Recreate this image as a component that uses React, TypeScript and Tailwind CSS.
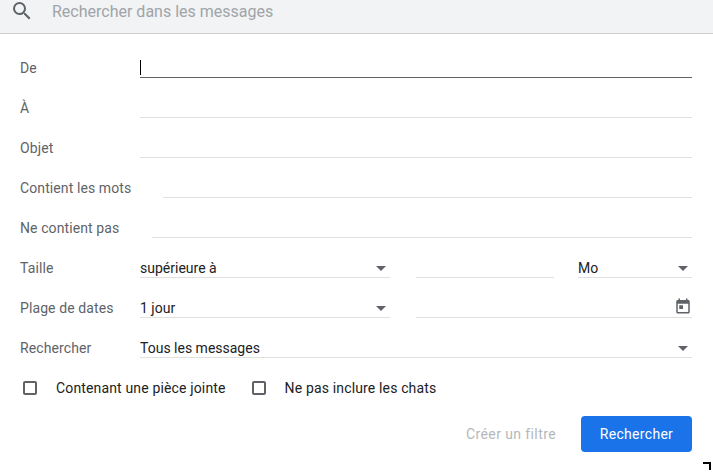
import React from "react";

const Caret = () => (
  <svg width="10" height="5" viewBox="0 0 10 5" className="shrink-0"><path d="M0 0h10L5 5z" fill="#5f6368" /></svg>
);

const Row = ({ label, children, gap = "w-[120px]" }: { label: string; children?: React.ReactNode; gap?: string }) => (
  <div className="flex items-end h-10">
    <div className={`${gap} shrink-0 text-[14px] text-[#5f6368] -mb-[1px] whitespace-nowrap tracking-[0.1px]`}>{label}</div>
    {children ?? <div className="flex-1 h-[22px] border-b border-[#e0e0e0]" />}
  </div>
);

const Sel = ({ text, cls }: { text: string; cls: string }) => (
  <div className={`flex items-center justify-between h-[22px] border-b border-[#e0e0e0] text-[14px] text-[#202124] pr-[4px] pt-[4px] ${cls}`}>
    <span>{text}</span>
    <Caret />
  </div>
);

const Box = () => <div className="w-[14px] h-[14px] border-2 border-[#5f6368] rounded-[2px]" />;

export default function App() {
  return (
    <div className="w-[713px] h-[473px] bg-white relative overflow-hidden" style={{ fontFamily: "Roboto, 'Liberation Sans', sans-serif" }}>
      <div className="h-[34px] bg-[#f1f3f4] border-b border-[#cfcfcf] flex items-center">
        <svg width="24" height="24" viewBox="0 0 24 24" className="ml-[10px] -mt-[12px]">
          <path fill="#5f6368" d="M15.5 14h-.79l-.28-.27A6.47 6.47 0 0 0 16 9.5 6.5 6.5 0 1 0 9.5 16c1.61 0 3.09-.59 4.23-1.57l.27.28v.79l5 4.99L20.49 19l-4.99-5zm-6 0C7.01 14 5 11.99 5 9.5S7.01 5 9.5 5 14 7.01 14 9.5 11.99 14 9.5 14z" />
        </svg>
        <span className="ml-[18px] -mt-[10px] text-[16px] text-[#a0a4a8]">Rechercher dans les messages</span>
      </div>
      <div className="pl-5 pr-[21px] pt-[4px]">
        <Row label="De">
          <div className="flex-1 h-[22px] border-b border-[#5f6368] relative">
            <div className="absolute left-0 top-[4px] w-px h-[15px] bg-black" />
          </div>
        </Row>
        <Row label="À" />
        <Row label="Objet" />
        <Row label="Contient les mots" gap="w-[143px]" />
        <Row label="Ne contient pas" gap="w-[132px]" />
        <Row label="Taille">
          <Sel text="supérieure à" cls="w-[250px]" />
          <div className="w-[138px] ml-[26px] h-[22px] border-b border-[#e0e0e0]" />
          <Sel text="Mo" cls="w-[114px] ml-[24px]" />
        </Row>
        <Row label="Plage de dates">
          <Sel text="1 jour" cls="w-[250px]" />
          <div className="flex-1 ml-[26px] h-[22px] border-b border-[#e0e0e0] flex justify-end items-start">
            <svg width="18" height="18" viewBox="0 0 24 24" className="mt-[1px]"><path fill="#5f6368" d="M19 4h-1V2h-2v2H8V2H6v2H5c-1.1 0-2 .9-2 2v14c0 1.1.9 2 2 2h14c1.1 0 2-.9 2-2V6c0-1.1-.9-2-2-2zm0 16H5V9h14v11zM7 11h5v5H7z" /></svg>
          </div>
        </Row>
        <Row label="Rechercher">
          <Sel text="Tous les messages" cls="flex-1" />
        </Row>
        <div className="flex items-center h-10 mt-[10px] text-[14px] text-[#202124] pl-[3px] tracking-[0.15px]">
          <Box />
          <span className="ml-[19px]">Contenant une pièce jointe</span>
          <div className="ml-[26px]"><Box /></div>
          <span className="ml-[19px]">Ne pas inclure les chats</span>
        </div>
        <div className="flex justify-end items-center mt-[8px]">
          <span className="text-[14px] text-[#b5b8bb] mr-[25px] tracking-[0.4px]">Créer un filtre</span>
          <button className="w-[111px] h-[36px] bg-[#1a73e8] rounded-[4px] text-white text-[14px] tracking-[0.3px]">Rechercher</button>
        </div>
      </div>
      <div className="absolute left-[703px] top-[462px] w-[8px] h-[2px] bg-black" />
      <div className="absolute left-[709px] top-[462px] w-[2px] h-[8px] bg-black" />
    </div>
  );
}
